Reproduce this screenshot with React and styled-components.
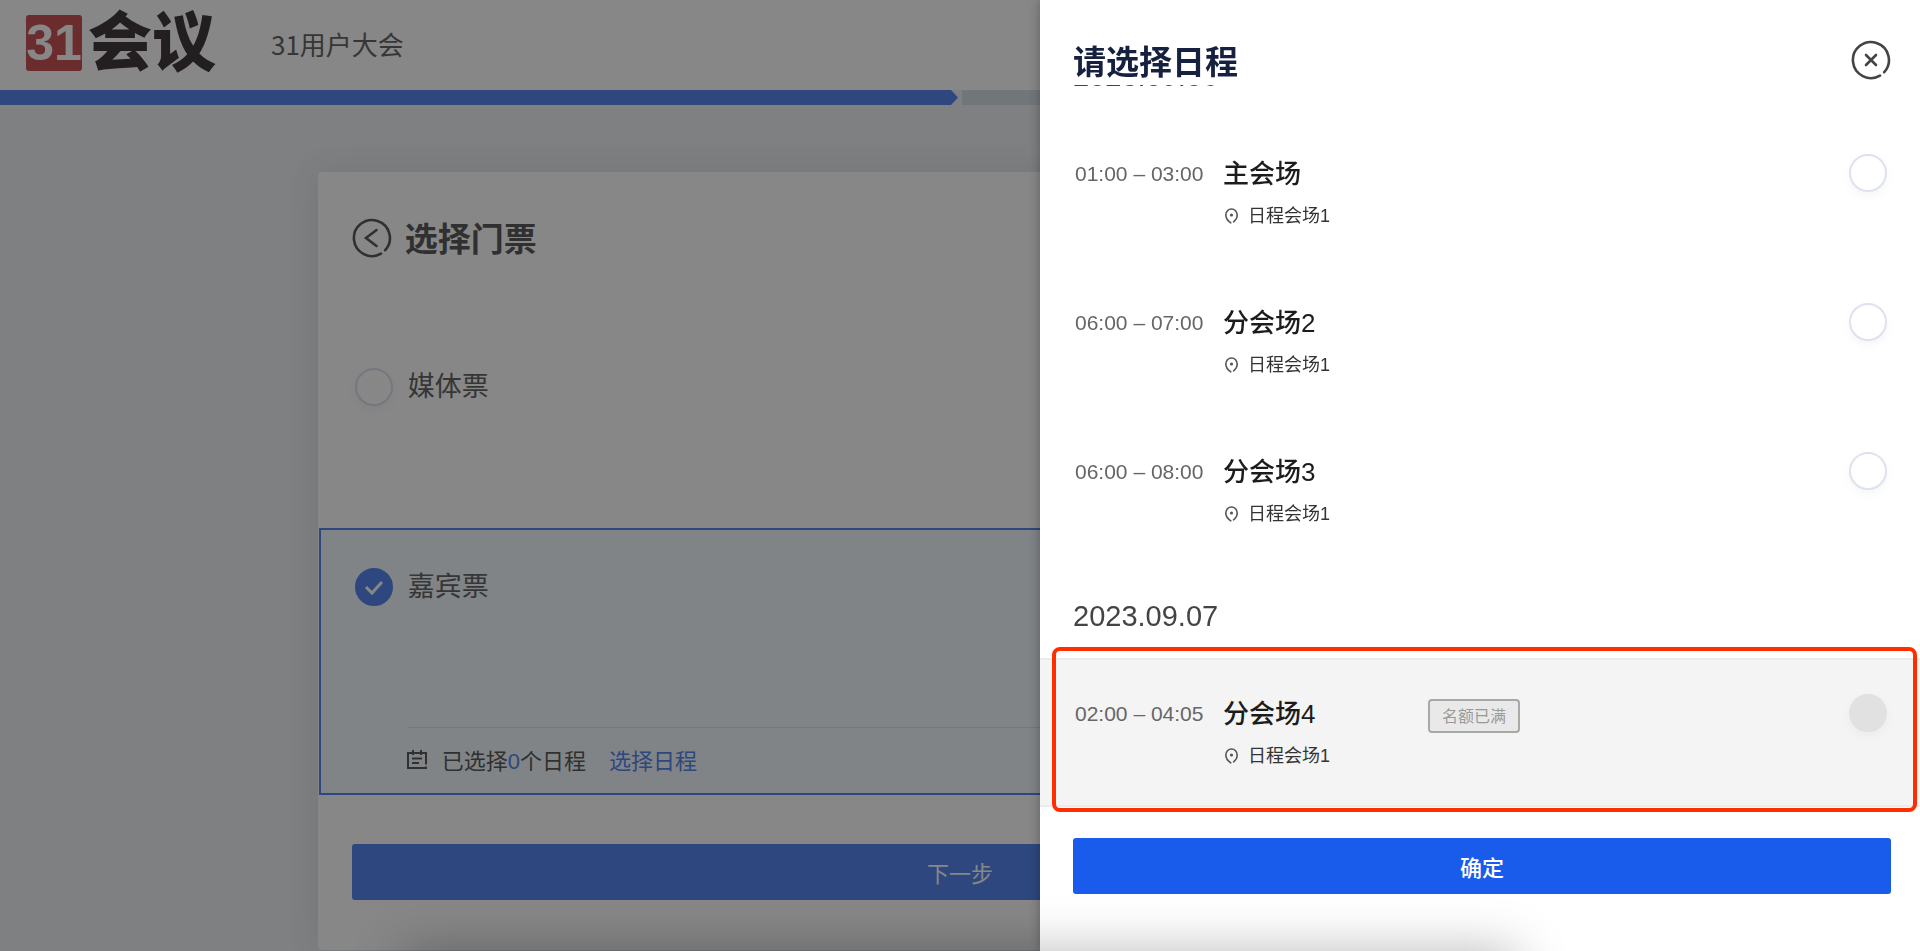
import React, {useState} from 'react'
import styled, {createGlobalStyle, css} from 'styled-components'

const blue = '#5786f0'
const drawerBlue = '#195beb'

const GlobalStyle = createGlobalStyle`
  * {
    box-sizing: border-box;
  }

  body {
    margin: 0;
    font-family: 'Liberation Sans', 'Noto Sans CJK SC', sans-serif;
  }

  button, input {
    font-family: inherit;
  }
`

const Page = styled.div`
  min-height: 100vh;
  overflow: hidden;
  background-color: #f0f1f3;
  color: #666;
`

const Header = styled.header`
  display: flex;
  align-items: center;
  gap: 55px;
  height: 90px;
  padding: 0 26px 5px;
  background-color: #fff;
`

const Logo = styled.div`
  display: flex;
  align-items: center;
  gap: 6px;
  height: 56px;
  color: #423a3c;
  font-size: 64px;
  font-weight: 900;
  line-height: 56px;
`

const LogoMark = styled.span`
  width: 56px;
  height: 56px;
  border-radius: 3px;
  background-color: #ca5357;
  color: #fff;
  font-size: 50px;
  font-weight: 700;
  text-align: center;
`

const EventName = styled.h1`
  margin: 2px 0 0;
  font-family: 'Noto Sans CJK SC', sans-serif;
  font-size: 26px;
  font-weight: 400;
  line-height: 36px;
`

const Steps = styled.div`
  display: flex;
  gap: 4px;
  height: 15px;
`

const Step = styled.div`
  flex: 1;
  background-color: #d6dfe5;
  ${props => props.$done && css`
    background-color: ${blue};
    clip-path: polygon(0 0, calc(100% - 7px) 0, 100% 50%, calc(100% - 7px) 100%, 0 100%);
  `}
`

const Card = styled.main`
  width: 66.9%;
  margin: 67px auto 0;
  padding-bottom: 50px;
  border-radius: 4px;
  background-color: #fff;
  box-shadow: 0 0 32px rgba(60, 80, 130, 0.12);
`

const CardHeader = styled.div`
  display: flex;
  align-items: center;
  gap: 13px;
  height: 132px;
  padding: 0 34px;
`

const CardTitle = styled.h2`
  margin: 4px 0 0;
  color: #5c5c5c;
  font-size: 33px;
  font-weight: 700;
  line-height: 40px;
`

const IconButton = styled.button`
  display: flex;
  padding: 0;
  border: 0;
  background: none;
  color: ${props => props.$color};
  cursor: pointer;
`

const Ticket = styled.div`
  height: ${props => props.$selected ? 267 : 224}px;
  margin: 0 1px;
  padding: ${props => props.$selected ? 35 : 59}px 34px 0;
  border: 2px solid ${props => props.$selected ? blue : 'transparent'};
  background-color: ${props => props.$selected ? '#f2f9fd' : 'transparent'};
`

const TicketLabel = styled.label`
  display: flex;
  align-items: center;
  gap: 15px;
  height: 44px;
  font-size: 27px;
  cursor: pointer;
`

const TicketName = styled.span`
  margin-bottom: 6px;
`

const Radio = styled.input`
  appearance: none;
  flex: none;
  width: 38px;
  height: 38px;
  margin: 0;
  border: 2px solid #dfe1ef;
  border-radius: 50%;
  background-color: #fff;
  box-shadow: 0 4px 8px rgba(80, 100, 140, 0.06);
  cursor: pointer;

  &:checked {
    border-color: ${blue};
    background: ${blue} url("data:image/svg+xml,%3Csvg xmlns='http://www.w3.org/2000/svg' viewBox='0 0 34 34' fill='none' stroke='white' stroke-width='3'%3E%3Cpath d='M9 17l6 6 10-11'/%3E%3C/svg%3E") center / 34px;
    box-shadow: none;
  }

  &:disabled {
    border-color: #e1e1e1;
    background-color: #e1e1e1;
    cursor: not-allowed;
  }
`

const TicketSchedule = styled.div`
  display: flex;
  align-items: center;
  height: 62px;
  margin: 118px 0 0 52px;
  border-top: 1px solid #dbe2e7;
  font-size: 22px;
  color: #5c5c5c;
`

const ScheduleText = styled.span`
  margin: 0 23px 0 15px;
`

const Count = styled.span`
  color: ${blue};
`

const ScheduleLink = styled.a`
  color: ${blue};
  text-decoration: none;
`

const SubmitButton = styled.button`
  display: block;
  width: ${props => props.$inCard ? 'calc(100% - 68px)' : 'auto'};
  height: 56px;
  margin: ${props => props.$inCard ? '49px 34px 0' : '0 29px 57px 33px'};
  border: 0;
  border-radius: 3px;
  background-color: ${props => props.$inCard ? blue : drawerBlue};
  color: #fff;
  font-size: 22px;
  font-weight: ${props => props.$inCard ? 400 : 500};
  cursor: pointer;
`

const Mask = styled.div`
  position: fixed;
  inset: 0;
  background-color: rgba(0, 0, 0, 0.47);
`

const Drawer = styled.aside`
  position: fixed;
  top: 0;
  right: 0;
  bottom: 0;
  display: flex;
  flex-direction: column;
  width: 880px;
  max-width: 100%;
  background-color: #fff;
  box-shadow: 0 0 12px rgba(0, 0, 0, 0.3);
`

const DrawerHeader = styled.div`
  display: flex;
  flex: none;
  align-items: center;
  justify-content: space-between;
  height: 85px;
  padding: 35px 29px 0 33px;
`

const DrawerTitle = styled.h2`
  margin: 6px 0 0;
  color: #16213f;
  font-size: 33px;
  font-weight: 700;
  line-height: 44px;
`

const DrawerBody = styled.div`
  flex: 1;
  min-height: 0;
  overflow: hidden;
`

/* the list is scrolled so that its first date is almost out of view */
const Days = styled.div`
  margin-top: -60px;
`

const DayTitle = styled.h3`
  display: flex;
  align-items: flex-end;
  height: 93px;
  margin: 0;
  padding: 0 33px 26px;
  color: #444;
  font-size: 29px;
  font-weight: 400;
  line-height: 32px;
`

const Session = styled.label`
  position: relative;
  display: flex;
  align-items: flex-start;
  height: 149px;
  padding: 34px 33px 0 35px;
  border: solid ${props => props.$full ? '#ebebeb' : 'transparent'};
  border-width: 2px 0;
  background-color: ${props => props.$full ? '#f4f4f4' : 'transparent'};
  cursor: ${props => props.$full ? 'not-allowed' : 'pointer'};
`

const SessionTime = styled.time`
  flex: none;
  width: 148px;
  color: #666;
  font-size: 21px;
  line-height: 40px;
`

const SessionInfo = styled.div`
  width: 205px;
`

const SessionName = styled.div`
  color: #1c1c1c;
  font-size: 26px;
  font-weight: 500;
  line-height: 40px;
`

const Place = styled.div`
  display: flex;
  align-items: center;
  gap: 10px;
  margin-top: 8px;
  padding-left: 2px;
  color: #333;
  font-size: 18px;
  line-height: 28px;
`

const FullTag = styled.span`
  height: 34px;
  margin-top: 5px;
  padding: 0 12px;
  border: 2px solid #a8a8a8;
  border-radius: 4px;
  background-color: #e9e9e9;
  color: #999;
  font-size: 16px;
  line-height: 32px;
`

const SessionRadio = styled(Radio)`
  margin-left: auto;
`

const Highlight = styled.span`
  position: absolute;
  inset: -13px 3px -7px 12px;
  border: 4px solid #ff2d00;
  border-radius: 8px;
  pointer-events: none;
`

const DockShadow = styled.div`
  position: fixed;
  bottom: -60px;
  left: 21%;
  right: 21%;
  height: 60px;
  box-shadow: 0 0 52px rgba(0, 0, 0, 0.28);
  pointer-events: none;
`

function RingIcon({children}) {
    return (
        <svg width="40" height="40" viewBox="0 0 40 40" fill="none" stroke="currentColor" strokeWidth="2.6" strokeLinecap="round">
            <path d="M33.2 32.2A18 18 0 1 0 29 35.6"/>
            {children}
        </svg>
    )
}

function PinIcon() {
    return (
        <svg width="13" height="16" viewBox="0 0 13 16" fill="none" stroke="#555" strokeWidth="1.6" strokeLinecap="round">
            <path d="M8.600 13.800C11 12 12.200 9.600 12.200 7C12.200 3.600 9.700 1 6.500 1S.8 3.600.8 7C.8 10.400 3 13 5.800 14.800"/>
            <circle cx="6.500" cy="7" r="1.600" fill="#555" stroke="none"/>
        </svg>
    )
}

function CalendarIcon() {
    return (
        <svg width="20" height="20" viewBox="0 0 20 20" fill="none" stroke="currentColor" strokeWidth="2">
            <path d="M19 15.500V4H1v15h18v-1.500M6 1v5M14 1v5M5 9.500h10M5 14h7"/>
        </svg>
    )
}

const days = [
    {
        date: '2023.09.06',
        sessions: [
            {id: 1, time: '01:00 – 03:00', name: '主会场', place: '日程会场1'},
            {id: 2, time: '06:00 – 07:00', name: '分会场2', place: '日程会场1'},
            {id: 3, time: '06:00 – 08:00', name: '分会场3', place: '日程会场1'},
        ]
    },
    {
        date: '2023.09.07',
        sessions: [
            {id: 4, time: '02:00 – 04:05', name: '分会场4', place: '日程会场1', full: true},
        ]
    }
]

function SessionRow({session, checked, onSelect}) {
    const {time, name, place, full = false} = session
    return (
        <Session $full={full}>
            <SessionTime>{time}</SessionTime>
            <SessionInfo>
                <SessionName>{name}</SessionName>
                <Place><PinIcon/>{place}</Place>
            </SessionInfo>
            {full && <FullTag>名额已满</FullTag>}
            <SessionRadio type="radio" name="session" checked={checked} disabled={full} onChange={onSelect}/>
            {full && <Highlight/>}
        </Session>
    )
}

export default function App() {
    const [ticket, setTicket] = useState('guest')
    const [selected, setSelected] = useState(null)
    return (
        <>
            <GlobalStyle/>
            <Page>
                <Header>
                    <Logo><LogoMark>31</LogoMark>会议</Logo>
                    <EventName>31用户大会</EventName>
                </Header>
                <Steps>
                    <Step $done/>
                    <Step/>
                </Steps>
                <Card>
                    <CardHeader>
                        <IconButton $color="#5c5c5c" aria-label="返回">
                            <RingIcon><path d="M24.500 12L14 20l10.500 8"/></RingIcon>
                        </IconButton>
                        <CardTitle>选择门票</CardTitle>
                    </CardHeader>
                    <Ticket>
                        <TicketLabel>
                            <Radio type="radio" name="ticket" checked={ticket === 'media'} onChange={() => setTicket('media')}/>
                            <TicketName>媒体票</TicketName>
                        </TicketLabel>
                    </Ticket>
                    <Ticket $selected>
                        <TicketLabel>
                            <Radio type="radio" name="ticket" checked={ticket === 'guest'} onChange={() => setTicket('guest')}/>
                            <TicketName>嘉宾票</TicketName>
                        </TicketLabel>
                        <TicketSchedule>
                            <CalendarIcon/>
                            <ScheduleText>已选择<Count>{selected ? 1 : 0}</Count>个日程</ScheduleText>
                            <ScheduleLink href="#schedule">选择日程</ScheduleLink>
                        </TicketSchedule>
                    </Ticket>
                    <SubmitButton $inCard>下一步</SubmitButton>
                </Card>
            </Page>
            <Mask/>
            <Drawer id="schedule">
                <DrawerHeader>
                    <DrawerTitle>请选择日程</DrawerTitle>
                    <IconButton $color="#444" aria-label="关闭">
                        <RingIcon><path d="M15 15l10 10M25 15L15 25"/></RingIcon>
                    </IconButton>
                </DrawerHeader>
                <DrawerBody>
                    <Days>
                        {days.map(day => (
                            <section key={day.date}>
                                <DayTitle>{day.date}</DayTitle>
                                {day.sessions.map(session => (
                                    <SessionRow
                                        key={session.id}
                                        session={session}
                                        checked={selected === session.id}
                                        onSelect={() => setSelected(session.id)}
                                    />
                                ))}
                            </section>
                        ))}
                    </Days>
                </DrawerBody>
                <SubmitButton>确定</SubmitButton>
            </Drawer>
            <DockShadow/>
        </>
    )
}
